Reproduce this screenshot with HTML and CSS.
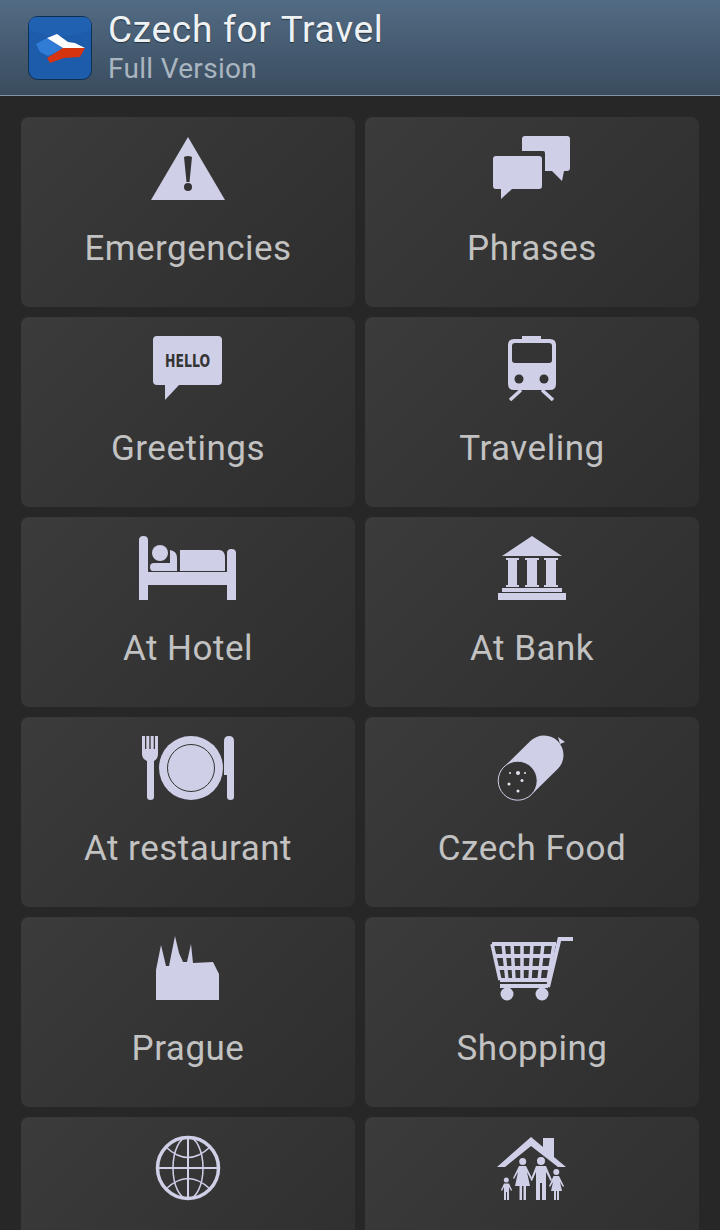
FILE: index.html
```html
<!DOCTYPE html>

<html lang="en">
<head>
    <title>Czech for Travel</title>
    <link rel="stylesheet" href="styles.css">
</head>

<body>
    <header class="topbar">
        <svg class="logo" viewBox="0 0 64 64">
            <rect x="0.5" y="0.5" width="63" height="63" rx="9" fill="#1d5bab" stroke="#0e2f4f"/>
            <path d="M1 9 Q1 1 9 1 H55 Q63 1 63 9 V14 Q32 26 1 14 Z" fill="#2161b1"/>
            <path d="M8 28 L19 22 L36 33 L20 40 L12 36 Z" fill="#2f7bd6"/>
            <path d="M19 22 L29 18 L40 26 L47 27 L57 32 L35 32 Z" fill="#fff"/>
            <path d="M35 32 H57 L52 41 L36 42 L22 47 L19 42 Z" fill="#d5340f"/>
        </svg>
        <div class="titles">
            <div class="app-name">Czech for Travel</div>
            <div class="app-sub">Full Version</div>
        </div>
    </header>

    <main class="tiles">
        <div class="tile">
            <svg class="icon" viewBox="0 0 110 66">
                <path d="M55 2 L92 65 H18 Z"/>
                <path class="cut" d="M51 22 Q55 20 59 22 L56.500 47 H53.500 Z"/>
                <circle class="cut" cx="55" cy="52" r="4"/>
            </svg>
            <div class="label">Emergencies</div>
        </div>
        <div class="tile">
            <svg class="icon" viewBox="0 0 110 66">
                <path d="M48 1 H90 Q93 1 93 4 V33 Q93 36 90 36 H87 L85 46 L75 36 H68 V18 Q68 16 66 16 H45 V4 Q45 1 48 1 Z"/>
                <path d="M19 21 H62 Q65 21 65 24 V51 Q65 54 62 54 H35 L24 64 V54 H19 Q16 54 16 51 V24 Q16 21 19 21 Z"/>
            </svg>
            <div class="label">Phrases</div>
        </div>
        <div class="tile">
            <svg class="icon" viewBox="0 0 110 66">
                <path d="M24 1 H85 Q89 1 89 5 V46 Q89 50 85 50 H46 L32 65 V50 H24 Q20 50 20 46 V5 Q20 1 24 1 Z"/>
                <text class="hello" x="32" y="32" textLength="45" lengthAdjust="spacingAndGlyphs">HELLO</text>
            </svg>
            <div class="label">Greetings</div>
        </div>
        <div class="tile">
            <svg class="icon" viewBox="0 0 110 66">
                <path d="M45 1 H64 V4 H73 Q79 4 79 10 V49 Q79 55 73 55 H37 Q31 55 31 49 V10 Q31 4 37 4 H45 Z"/>
                <rect class="cut" x="35" y="8" width="40" height="20" rx="3"/>
                <circle class="cut" cx="42" cy="44" r="4.500"/>
                <circle class="cut" cx="67" cy="44" r="4.500"/>
                <path class="rail" d="M44 55 L33 65 M65 55 L76 65"/>
            </svg>
            <div class="label">Traveling</div>
        </div>
        <div class="tile">
            <svg class="icon" viewBox="0 0 110 66">
                <path d="M6 5 Q6 1 10.500 1 Q15 1 15 5 V37 H94 V18 Q94 14 98.500 14 Q103 14 103 18 V65 H94 V50 H15 V65 H6 Z"/>
                <circle cx="27" cy="18" r="8"/>
                <path d="M37 15 Q44 16 44 23 V36 H20 Q17 36 17 32 Q17 28 21 28 H37 Z"/>
                <path d="M47 15 H86 Q92 15 92 23 V36 H47 Z"/>
            </svg>
            <div class="label">At Hotel</div>
        </div>
        <div class="tile">
            <svg class="icon" viewBox="0 0 110 66">
                <path d="M55 1 L85 21 H25 Z"/>
                <path d="M29 23 H42 V25 H40 V50 H42 V52 H29 V50 H31 V25 H29 Z"/>
                <path d="M48 23 H62 V25 H60 V50 H62 V52 H48 V50 H50 V25 H48 Z"/>
                <path d="M67 23 H81 V25 H79 V50 H81 V52 H67 V50 H69 V25 H67 Z"/>
                <rect x="25" y="53" width="60" height="4"/>
                <rect x="21" y="58" width="68" height="7"/>
            </svg>
            <div class="label">At Bank</div>
        </div>
        <div class="tile">
            <svg class="icon" viewBox="0 0 110 66">
                <path d="M9 1 H12 V14 H13.300 V1 H16.300 V14 H17.700 V1 H20.700 V14 H22 V1 H25 V19 Q25 24 21 26 V62 Q21 65 17.500 65 Q14 65 14 62 V26 Q9 24 9 19 Z"/>
                <circle cx="58" cy="33" r="32"/>
                <circle class="ring" cx="58" cy="33" r="23.500"/>
                <path d="M91 6 Q91 1 96 1 Q101 1 101 6 V62 Q101 65 97.500 65 Q94 65 94 62 V40 H91 Z"/>
            </svg>
            <div class="label">At restaurant</div>
        </div>
        <div class="tile">
            <svg class="icon" viewBox="0 0 110 66">
                <path class="sausage" d="M41 45.500 L67 20"/>
                <path d="M81 2 L88 7 L83 9 Z"/>
                <circle class="salami-end" cx="40.700" cy="45.700" r="19.500"/>
                <circle class="fleck" cx="41" cy="38" r="2"/>
                <circle class="fleck" cx="33" cy="38" r="1"/>
                <circle class="fleck" cx="48" cy="38" r="1"/>
                <circle class="fleck" cx="45" cy="45.500" r="1.500"/>
                <circle class="fleck" cx="32" cy="49" r="1.500"/>
                <circle class="fleck" cx="41" cy="56" r="1.500"/>
            </svg>
            <div class="label">Czech Food</div>
        </div>
        <div class="tile">
            <svg class="icon" viewBox="0 0 110 66">
                <path d="M23 65 V35 L28 10 L33 31 H36 L42 1 L46 18 L50 27 H54 L58 9 L60 28 L80 27 L86 39 V65 Z"/>
            </svg>
            <div class="label">Prague</div>
        </div>
        <div class="tile">
            <svg class="icon" viewBox="0 0 110 66">
                <path class="cart-handle" d="M96 4 H82.500 L71 52"/>
                <path class="cart-thick" d="M15 9 H79 M17 21 H76 M20 33 H73 M23 45 H71 M23 51 H71"/>
                <path class="cart-thin" d="M15 9 L23 45 M26 9 L30 45 M35 9 L37 45 M45 9 L45 45 M55 9 L53 45 M66 9 L62 45 M77 9 L71 45"/>
                <circle cx="30" cy="59" r="6.500"/>
                <circle cx="65" cy="59" r="6.500"/>
            </svg>
            <div class="label">Shopping</div>
        </div>
        <div class="tile">
            <svg class="icon" viewBox="0 0 110 66">
                <circle class="globe-rim" cx="55" cy="33" r="30.500"/>
                <path class="globe-line" d="M24 33 H86 M55 2 V64"/>
                <ellipse class="globe-thin" cx="55" cy="33" rx="15" ry="31"/>
                <path class="globe-thin" d="M33 12 Q55 33 77 12 M33 54 Q55 33 77 54"/>
            </svg>
        </div>
        <div class="tile">
            <svg class="icon" viewBox="0 0 110 66">
                <path d="M20 32 L54 2 L66 12 V3 H77 V22 L89 32 H81 L54 11 L28 32 Z"/>
                <circle cx="45.700" cy="26.500" r="3.500"/>
                <path d="M42 31 H49 L55 43 L53.500 44 L50 37 L53 51 H49 V65 H46.500 V51 H45 V65 H42.500 V51 H38 L41 37 L37 44 L36 43 Z"/>
                <circle cx="64" cy="26" r="4"/>
                <path d="M59 31 H69 L75 45 L73.500 46 L69 37 V65 H65 V48 H63 V65 H59 V37 L55 46 L53.500 45 Z"/>
                <circle cx="29.300" cy="45" r="2.500"/>
                <path d="M27 48.500 H32 L35 55 L34 56 L32 52 V65 H30 V57 H29 V65 H27 V52 L25 56 L24 55 Z"/>
                <circle cx="79.300" cy="37" r="3"/>
                <path d="M76.500 41 H82 L87 51 L86 52 L83 47 L85 56 H82 V65 H80 V56 H79 V65 H77 V56 H74 L76 47 L73 52 L72 51 Z"/>
            </svg>
        </div>
    </main>
</body>
</html>
```

FILE: styles.css
```css
html {
    height: 100%;
    overflow: hidden;
}
body {
    margin: 0;
    height: 100%;
    overflow: hidden;
    background-color: #272727;
    font-family: Roboto, Arial, sans-serif;
}
.topbar {
    display: flex;
    align-items: center;
    gap: 16px;
    box-sizing: border-box;
    height: 96px;
    padding-left: 28px;
    background: linear-gradient(#526b84, #3a4c5e);
    border-bottom: 1px solid #8094a4;
}
.logo {
    width: 64px;
    height: 64px;
    flex: none;
}
.titles {
    display: flex;
    flex-direction: column;
}
.app-name {
    font-size: 37px;
    line-height: 42px;
    color: #eef2f5;
    letter-spacing: 0.7px;
    text-shadow: 0 1px 1px #26323e;
}
.app-sub {
    font-size: 28px;
    line-height: 36px;
    color: #a9b5c0;
    letter-spacing: 0.3px;
}
.tiles {
    display: grid;
    grid-template-columns: 334px 334px;
    grid-auto-rows: 190px;
    gap: 10px;
    padding: 21px 0 0 21px;
}
.tile {
    display: flex;
    flex-direction: column;
    align-items: center;
    padding-top: 18px;
    box-sizing: border-box;
    border-radius: 8px;
    background: linear-gradient(135deg, #3b3b3b, #2e2e2e);
}
.icon {
    width: 110px;
    height: 66px;
    flex: none;
    fill: #cfcfe8;
}
.label {
    margin-top: 28px;
    font-size: 35px;
    line-height: 40px;
    color: #c2c2c2;
    letter-spacing: 0.5px;
}
.cut {
    fill: #343434;
}
.hello {
    font-family: "DejaVu Sans", sans-serif;
    font-size: 17px;
    font-weight: 700;
    fill: #343434;
}
.rail {
    fill: none;
    stroke: #cfcfe8;
    stroke-width: 3.500;
}
.ring {
    fill: none;
    stroke: #343434;
    stroke-width: 1;
}
.sausage {
    fill: none;
    stroke: #cfcfe8;
    stroke-width: 39;
    stroke-linecap: round;
}
.salami-end {
    fill: #343434;
    stroke: #cfcfe8;
    stroke-width: 1;
}
.fleck {
    fill: #e4e4f0;
}
.cart-handle {
    fill: none;
    stroke: #cfcfe8;
    stroke-width: 4;
}
.cart-thick {
    fill: none;
    stroke: #cfcfe8;
    stroke-width: 4;
}
.cart-thin {
    fill: none;
    stroke: #cfcfe8;
    stroke-width: 3.500;
}
.globe-rim {
    fill: none;
    stroke: #cfcfe8;
    stroke-width: 3.500;
}
.globe-line {
    fill: none;
    stroke: #cfcfe8;
    stroke-width: 2;
}
.globe-thin {
    fill: none;
    stroke: #cfcfe8;
    stroke-width: 1.500;
}
```
